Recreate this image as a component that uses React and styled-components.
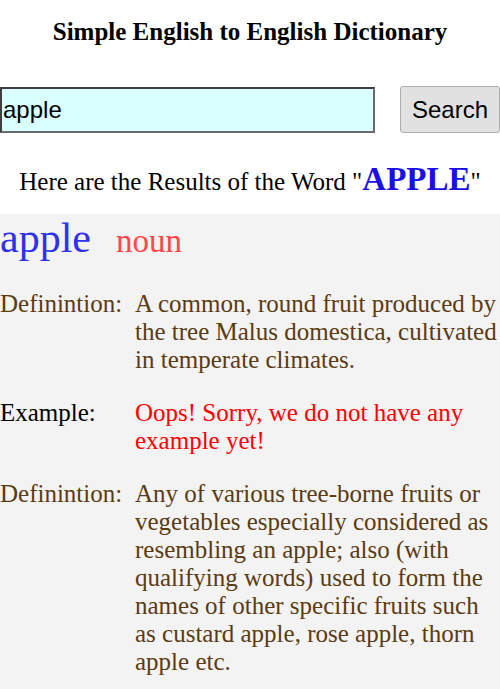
import React, { useState } from 'react'
import styled, { createGlobalStyle } from 'styled-components'

const GlobalStyle = createGlobalStyle`
    html, body {
        margin: 0;
        padding: 0;
        background: #fff;
    }
    body {
        font-family: "Liberation Serif", "Times New Roman", serif;
    }
`

const entries = [
    {
        label: 'Definintion:',
        text: 'A common, round fruit produced by the tree Malus domestica, cultivated in temperate climates.',
        kind: 'def',
    },
    {
        label: 'Example:',
        text: 'Oops! Sorry, we do not have any example yet!',
        kind: 'example',
    },
    {
        label: 'Definintion:',
        text: 'Any of various tree-borne fruits or vegetables especially considered as resembling an apple; also (with qualifying words) used to form the names of other specific fruits such as custard apple, rose apple, thorn apple etc.',
        kind: 'def',
    },
]

export default function App() {
    const [input, setInput] = useState('apple')
    const word = 'apple'

    return (
        <Page>
            <GlobalStyle />
            <Title>Simple English to English Dictionary</Title>
            <SearchBar>
                <SearchInput type="text" value={input} onChange={e => setInput(e.target.value)} />
                <SearchBtn>Search</SearchBtn>
            </SearchBar>
            <ResultsHeading>
                Here are the Results of the Word "<Highlight>{word.toUpperCase()}</Highlight>"
            </ResultsHeading>
            <Results>
                <WordHead>
                    <Word>{word}</Word>
                    <PartOfSpeech>noun</PartOfSpeech>
                </WordHead>
                {entries.map((entry, i) => (
                    <Entry key={i} kind={entry.kind}>
                        <Label kind={entry.kind}>{entry.label}</Label>
                        <Value kind={entry.kind}>{entry.text}</Value>
                    </Entry>
                ))}
            </Results>
        </Page>
    )
}

const Page = styled.div`
    display: flex;
    flex-direction: column;
    min-height: 689px;
`

const Title = styled.h3`
    margin: 18px 0 0;
    text-align: center;
    font-size: 25px;
    line-height: 28px;
    font-weight: bold;
    color: #000;
`

const SearchBar = styled.div`
    display: flex;
    align-items: center;
    justify-content: space-between;
    margin-top: 40px;
`

const SearchInput = styled.input`
    box-sizing: border-box;
    width: 375px;
    height: 46px;
    padding: 0 0 0 1px;
    margin: 0;
    background: #d9ffff;
    border: 2px solid #3f3f3f;
    border-right-color: #6a6a6a;
    border-bottom-color: #6a6a6a;
    font-family: "Liberation Sans", Arial, sans-serif;
    font-size: 24px;
    color: #000;
    outline: none;
`

const SearchBtn = styled.button`
    box-sizing: border-box;
    width: 100px;
    height: 47px;
    padding: 0;
    background: #e1e1e1;
    border: 1px solid #adadad;
    border-radius: 3px;
    font-family: "Liberation Sans", Arial, sans-serif;
    font-size: 24px;
    color: #000;
`

const ResultsHeading = styled.p`
    margin: 28px 0 14px;
    text-align: center;
    font-size: 25px;
    line-height: 36px;
    color: #000;
`

const Highlight = styled.b`
    font-size: 33px;
    color: #1a0fe6;
`

const Results = styled.div`
    flex: 1;
    background: #f3f3f3;
    padding-bottom: 20px;
`

const WordHead = styled.div`
    display: flex;
    align-items: baseline;
    gap: 25px;
    line-height: 48px;
`

const Word = styled.span`
    font-size: 42px;
    color: #3030f0;
`

const PartOfSpeech = styled.span`
    font-size: 33px;
    color: #ff4848;
`

const Entry = styled.div`
    display: grid;
    grid-template-columns: 135px 1fr;
    margin-top: 25px;
    font-size: 25px;
    line-height: 28px;

    &:first-of-type {
        margin-top: 0;
    }
`

const Label = styled.div`
    color: ${p => (p.kind === 'example' ? '#000' : '#5b3b12')};
`

const Value = styled.div`
    color: ${p => (p.kind === 'example' ? '#ff0000' : '#5b3b12')};
`
